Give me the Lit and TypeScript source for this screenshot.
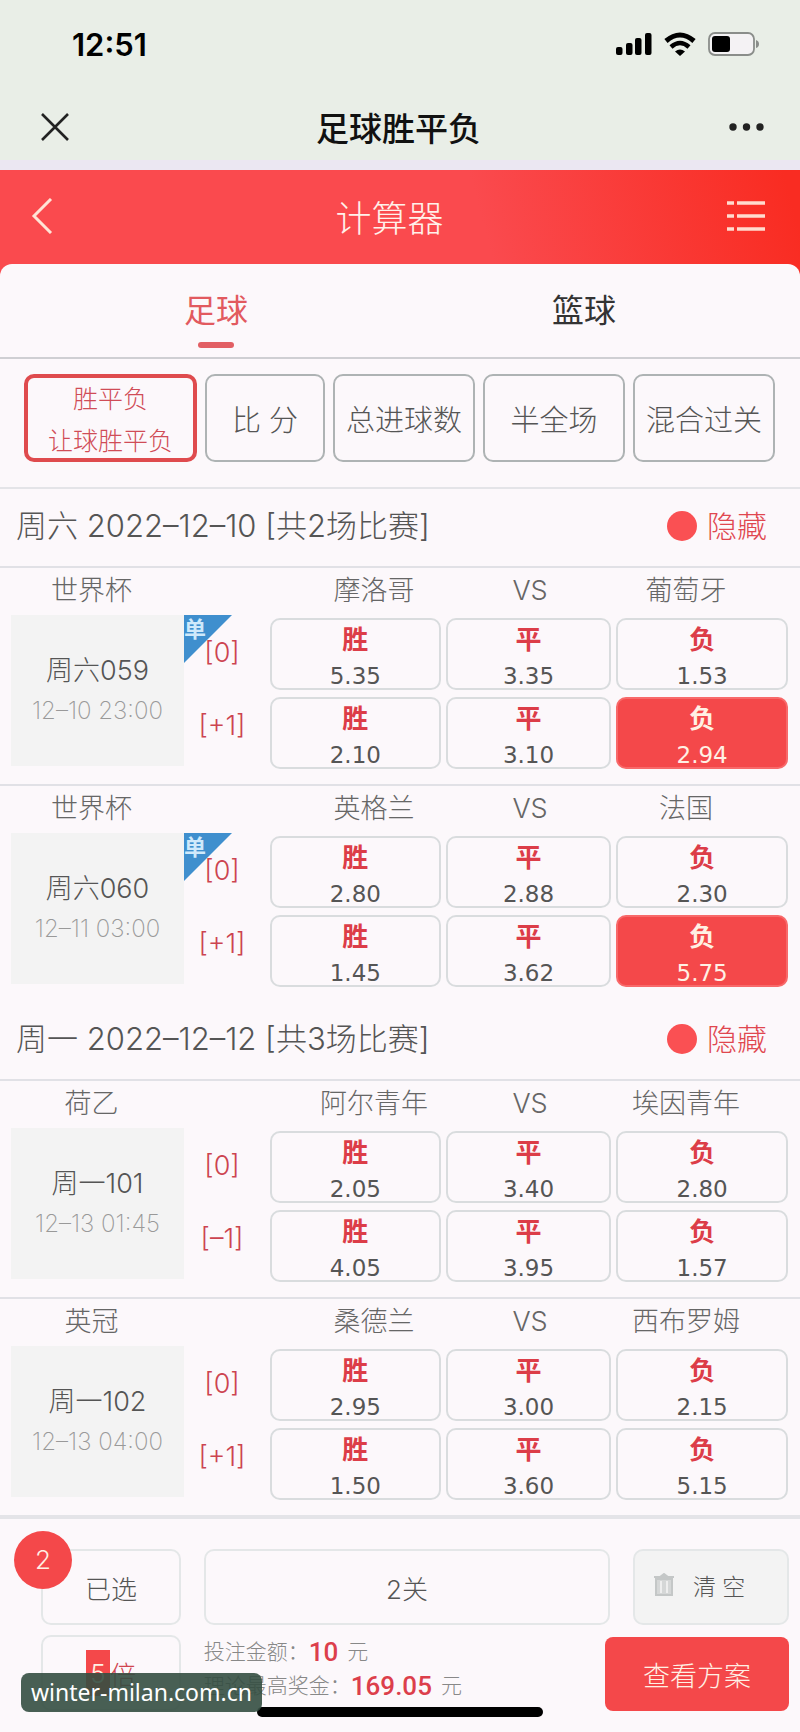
import { LitElement, html, css, svg, nothing } from "lit";
import { customElement, property, state } from "lit/decorators.js";
import { classMap } from "lit/directives/class-map.js";

interface Line {
  handicap: string;
  odds: string[];
}
interface Match {
  league: string;
  no: string;
  time: string;
  home: string;
  away: string;
  single: boolean;
  lines: Line[];
}
interface Day {
  title: string;
  matches: Match[];
}

const DAYS: Day[] = [
  {
    title: "周六 2022–12–10 [共2场比赛]",
    matches: [
      {
        league: "世界杯", no: "周六059", time: "12–10 23:00", home: "摩洛哥", away: "葡萄牙", single: true,
        lines: [
          { handicap: "[0]", odds: ["5.35", "3.35", "1.53"] },
          { handicap: "[+1]", odds: ["2.10", "3.10", "2.94"] },
        ],
      },
      {
        league: "世界杯", no: "周六060", time: "12–11 03:00", home: "英格兰", away: "法国", single: true,
        lines: [
          { handicap: "[0]", odds: ["2.80", "2.88", "2.30"] },
          { handicap: "[+1]", odds: ["1.45", "3.62", "5.75"] },
        ],
      },
    ],
  },
  {
    title: "周一 2022–12–12 [共3场比赛]",
    matches: [
      {
        league: "荷乙", no: "周一101", time: "12–13 01:45", home: "阿尔青年", away: "埃因青年", single: false,
        lines: [
          { handicap: "[0]", odds: ["2.05", "3.40", "2.80"] },
          { handicap: "[–1]", odds: ["4.05", "3.95", "1.57"] },
        ],
      },
      {
        league: "英冠", no: "周一102", time: "12–13 04:00", home: "桑德兰", away: "西布罗姆", single: false,
        lines: [
          { handicap: "[0]", odds: ["2.95", "3.00", "2.15"] },
          { handicap: "[+1]", odds: ["1.50", "3.60", "5.15"] },
        ],
      },
    ],
  },
];

const OUTCOMES = ["胜", "平", "负"];

const reset = css`
  * {
    box-sizing: border-box;
  }
  button,
  input {
    font: inherit;
    color: inherit;
    background: none;
    border: 0;
    margin: 0;
    padding: 0;
  }
  button {
    cursor: pointer;
  }
  svg {
    display: block;
  }
`;

@customElement("match-row")
export class MatchRow extends LitElement {
  @property({ attribute: false }) match!: Match;
  @property({ attribute: false }) picked: Set<string> = new Set();

  static styles = [
    reset,
    css`
      :host {
        display: block;
        border-top: 2px solid #e1e1e6;
      }
      .head {
        display: grid;
        grid-template-columns: 183fr 113fr 156fr 156fr 156fr 36fr;
        line-height: 46px;
        font-size: 27px;
        color: #666;
        text-align: center;
        white-space: nowrap;
      }
      .home {
        grid-column: 3;
      }
      .body {
        display: grid;
        grid-template-columns: 173fr 86fr 518fr;
        align-items: start;
        padding: 1px 12px 15px 11px;
      }
      .info {
        display: flex;
        flex-direction: column;
        align-items: center;
        justify-content: center;
        height: 151px;
        background: #f3f3f3;
        color: #555;
        font-size: 27px;
        line-height: 40px;
      }
      .time {
        font-size: 24px;
        font-weight: 200;
        color: #999;
      }
      .handicaps {
        position: relative;
        display: grid;
        grid-template-rows: 74px 73px;
        align-items: center;
        text-align: center;
        font-size: 27px;
        color: #cc4450;
        padding: 0 10px 0 0;
      }
      .ribbon {
        position: absolute;
        left: 0;
        top: 0;
        width: 48px;
        height: 48px;
        background: #3f8fce;
        clip-path: polygon(0 0, 100% 0, 0 100%);
        color: #cfe9fb;
        font-size: 22px;
        line-height: 28px;
        font-weight: 700;
        text-align: left;
      }
      .handicap {
        position: relative;
      }
      .odds {
        display: grid;
        grid-template-columns: 171fr 166fr 172fr;
        grid-auto-rows: 72px;
        gap: 7px 5px;
        padding-top: 3px;
      }
      .odd {
        display: flex;
        flex-direction: column;
        align-items: center;
        justify-content: flex-start;
        padding-top: 2px;
        border: 2px solid #d9dcde;
        border-radius: 10px;
        line-height: 36px;
      }
      .outcome {
        font-size: 26px;
        font-weight: 700;
        color: #dc3d48;
      }
      .value {
        font-family: "DejaVu Sans", sans-serif;
        font-size: 23px;
        font-weight: 400;
        color: #555;
      }
      .on {
        background: #f4484a;
        border-color: #f8696a;
      }
      .on .outcome,
      .on .value {
        color: #fff0e4;
      }
    `,
  ];

  private toggle(key: string) {
    this.dispatchEvent(new CustomEvent("pick", { detail: key, bubbles: true, composed: true }));
  }

  render() {
    const m = this.match;
    return html`
      <div class="head">
        <span>${m.league}</span>
        <span class="home">${m.home}</span>
        <span>VS</span>
        <span>${m.away}</span>
      </div>
      <div class="body">
        <div class="info"><span>${m.no}</span><span class="time">${m.time}</span></div>
        <div class="handicaps">
          ${m.single ? html`<span class="ribbon">单</span>` : nothing}
          ${m.lines.map((l) => html`<span class="handicap">${l.handicap}</span>`)}
        </div>
        <div class="odds">
          ${m.lines.map((l, row) =>
            l.odds.map((value, i) => {
              const key = `${m.no}-${row}-${i}`;
              const on = this.picked.has(key);
              return html`<button
                class=${classMap({ odd: true, on })}
                aria-pressed=${on ? "true" : "false"}
                @click=${() => this.toggle(key)}
              >
                <span class="outcome">${OUTCOMES[i]}</span><span class="value">${value}</span>
              </button>`;
            })
          )}
        </div>
      </div>
    `;
  }
}

@customElement("app-root")
export class AppRoot extends LitElement {
  @state() private picked = new Set(["周六059-1-2", "周六060-1-2"]);

  static styles = [
    reset,
    css`
      :host {
        display: block;
        position: relative;
        background: #fcf8fb;
        color: #555;
        font-family: Inter, "Noto Sans CJK SC", sans-serif;
        font-weight: 300;
        overflow: hidden;
      }
      .chrome {
        background: linear-gradient(#e9eee7 160px, #ebe7f2 160px);
        color: #111;
      }
      .status {
        display: flex;
        align-items: center;
        justify-content: space-between;
        height: 88px;
        padding: 0 41px 0 72px;
      }
      .clock {
        font-size: 31px;
        font-weight: 600;
        color: #000;
      }
      .signals {
        display: flex;
        align-items: center;
        gap: 12px;
      }
      .nav {
        display: flex;
        align-items: center;
        justify-content: space-between;
        height: 82px;
        padding: 0 36px 4px 41px;
      }
      .title {
        margin: 0;
        font-size: 33px;
        font-weight: 500;
      }
      .banner {
        display: flex;
        align-items: center;
        justify-content: space-between;
        height: 106px;
        padding: 0 34px 14px 31px;
        background: linear-gradient(75deg, #fa4a4e 60%, #f92c22 98%);
        color: #fff1ea;
      }
      .heading {
        margin: 0;
        font-size: 36px;
        font-weight: 300;
      }
      .sheet {
        position: relative;
        margin-top: -12px;
        border-radius: 12px 12px 0 0;
        background: #fcf8fb;
      }
      .tabs {
        display: grid;
        grid-template-columns: 1fr 1fr;
        padding: 0 32px;
        border-bottom: 2px solid #cfcfd3;
      }
      .tab {
        display: flex;
        flex-direction: column;
        align-items: center;
        height: 93px;
        padding-top: 16px;
        font-size: 32px;
        line-height: 62px;
        font-weight: 400;
        color: #333;
      }
      .tab.current {
        color: #e25a5f;
      }
      .tab.current::after {
        content: "";
        width: 36px;
        height: 6px;
        border-radius: 3px;
        background: #e25f64;
      }
      .plays {
        display: grid;
        grid-template-columns: 173fr 120fr 142fr 142fr 142fr;
        gap: 8px;
        padding: 15px 25px 25px 24px;
        border-bottom: 2px solid #e4e4e8;
      }
      .play {
        height: 88px;
        border: 2px solid #aeb3b4;
        border-radius: 10px;
        font-size: 29px;
        white-space: nowrap;
      }
      .play.current {
        border: 4px solid #df4b4e;
        font-size: 25px;
        line-height: 42px;
        color: #d04c57;
      }
      .day {
        display: flex;
        align-items: center;
        justify-content: space-between;
        height: 77px;
        padding: 0 33px 4px 16px;
        line-height: 40px;
      }
      .date {
        margin: 0;
        font-size: 31px;
        font-weight: 300;
      }
      .hide {
        display: flex;
        align-items: center;
        gap: 10px;
        font-size: 30px;
        color: #e0474f;
      }
      .dot {
        width: 30px;
        height: 30px;
        border-radius: 50%;
        background: #fa5053;
      }
      .footer {
        display: grid;
        grid-template-columns: 140fr 407fr 156fr;
        gap: 10px 23px;
        padding: 30px 11px 21px 41px;
        border-top: 4px solid #e4e4e8;
      }
      .cell {
        position: relative;
        display: flex;
        align-items: center;
        justify-content: center;
        height: 76px;
        border: 2px solid #e4e7e8;
        border-radius: 10px;
        font-size: 26px;
      }
      .badge {
        position: absolute;
        left: -29px;
        top: -20px;
        width: 58px;
        height: 58px;
        border-radius: 50%;
        background: #f4484a;
        color: #fff0e4;
        line-height: 58px;
        text-align: center;
      }
      .clear {
        gap: 18px;
        padding: 0 24px 4px 0;
        background: #f3f3f3;
        font-size: 23px;
      }
      .times {
        color: #d0454f;
      }
      .count {
        width: 24px;
        height: 46px;
        background: #f4484a;
        color: #fff0e4;
        text-align: center;
      }
      .summary {
        grid-column: 2 / 4;
        display: flex;
        justify-content: space-between;
        align-items: start;
      }
      .amounts {
        font-size: 21px;
        line-height: 34px;
        color: #888;
        white-space: nowrap;
      }
      .amount {
        display: flex;
        align-items: center;
      }
      .money {
        margin-right: 9px;
        font-family: Roboto, sans-serif;
        font-size: 26px;
        font-weight: 500;
        color: #dc3f4b;
      }
      .submit {
        width: 184px;
        height: 74px;
        margin-top: 2px;
        border-radius: 8px;
        background: #f4484a;
        color: #fff0e4;
        font-size: 27px;
      }
      .site {
        position: absolute;
        left: 21px;
        bottom: 20px;
        padding: 0 10px;
        border-radius: 8px;
        background: rgba(52, 78, 65, 0.9);
        color: #fff;
        font-family: "Noto Sans", sans-serif;
        font-weight: 400;
        font-size: 23px;
        line-height: 39px;
        text-decoration: none;
      }
      .home-bar {
        position: absolute;
        left: 50%;
        bottom: 15px;
        width: 286px;
        height: 10px;
        margin-left: -143px;
        border-radius: 5px;
        background: #000;
      }
    `,
  ];

  private onPick(e: CustomEvent<string>) {
    const next = new Set(this.picked);
    if (!next.delete(e.detail)) next.add(e.detail);
    this.picked = next;
  }

  private signals() {
    return html`<div class="signals">
      <svg width="36" height="24" viewBox="0 0 36 24">
        ${[[0, 15], [10, 11], [19, 6], [29, 1]].map(
          ([x, y]) => svg`<rect x=${x} y=${y} width="6.500" height=${23 - y} rx="2" />`
        )}
      </svg>
      <svg width="32" height="24" viewBox="0 0 32 24" fill="none" stroke="#000" stroke-width="5">
        <path d="M2 9 Q16 -3 30 9" />
        <path d="M7 15 Q16 7 25 15" stroke-width="4.500" />
        <path d="M11 19.500 Q16 15.500 21 19.500 L16 24Z" fill="#000" stroke="none" />
      </svg>
      <svg width="51" height="24" viewBox="0 0 51 24">
        <rect x="1" y="1" width="45" height="22" rx="6" fill="#f4f2f4" stroke="#8a8d8a" stroke-width="1.800" />
        <rect x="4" y="4" width="18" height="16" rx="3" />
        <path d="M48 8 Q51 9 51 12 T48 16Z" fill="#8a8d8a" />
      </svg>
    </div>`;
  }

  render() {
    return html`
      <div class="chrome">
        <div class="status"><span class="clock">12:51</span>${this.signals()}</div>
        <div class="nav">
          <button aria-label="关闭">
            <svg width="28" height="28" viewBox="0 0 28 28" fill="none" stroke="#222" stroke-width="2.600">
              <path d="M1 1 L27 27 M27 1 L1 27" />
            </svg>
          </button>
          <h1 class="title">足球胜平负</h1>
          <button aria-label="更多">
            <svg width="36" height="10" viewBox="0 0 36 10" fill="#222">
              <circle cx="5" cy="5" r="3.700" /><circle cx="18.500" cy="5" r="3.700" /><circle cx="32" cy="5" r="3.700" />
            </svg>
          </button>
        </div>
      </div>
      <header class="banner">
        <button aria-label="返回">
          <svg width="22" height="36" viewBox="0 0 22 36" fill="none" stroke="#ffe4d6" stroke-width="3">
            <path d="M20 1 L3 18 L20 35" />
          </svg>
        </button>
        <h2 class="heading">计算器</h2>
        <button aria-label="菜单">
          <svg width="40" height="32" viewBox="0 0 40 32" fill="none" stroke="#ffdccf" stroke-width="3.600">
            <path d="M1 3 H8 M11 3 H39 M1 16 H8 M11 16 H39 M1 29 H8 M11 29 H39" />
          </svg>
        </button>
      </header>
      <main class="sheet" @pick=${this.onPick}>
        <nav class="tabs">
          <button class="tab current">足球</button>
          <button class="tab">篮球</button>
        </nav>
        <div class="plays">
          <button class="play current">胜平负<br />让球胜平负</button>
          <button class="play">比 分</button>
          <button class="play">总进球数</button>
          <button class="play">半全场</button>
          <button class="play">混合过关</button>
        </div>
        ${DAYS.map(
          (d) => html`
            <section>
              <div class="day">
                <h3 class="date">${d.title}</h3>
                <button class="hide"><span class="dot"></span>隐藏</button>
              </div>
              ${d.matches.map((m) => html`<match-row .match=${m} .picked=${this.picked}></match-row>`)}
            </section>
          `
        )}
      </main>
      <footer class="footer">
        <button class="cell">已选<span class="badge">${this.picked.size}</span></button>
        <button class="cell">2关</button>
        <button class="cell clear">
          <svg width="22" height="24" viewBox="0 0 22 24" fill="none" stroke="#c4c7c7" stroke-width="2">
            <path d="M1 4 H21 M7 4 L11 1 L15 4" />
            <path d="M3 6 V22 H19 V6Z" fill="#d5d7d7" />
            <path d="M8 8 V20 M14 8 V20" stroke="#eee" />
          </svg>
          清 空
        </button>
        <label class="cell times"><input class="count" type="text" value="5" />倍</label>
        <div class="summary">
          <div class="amounts">
            <div class="amount">投注金额： <b class="money">10</b> 元</div>
            <div class="amount">理论最高奖金： <b class="money">169.05</b> 元</div>
          </div>
          <button class="submit">查看方案</button>
        </div>
      </footer>
      <div class="home-bar"></div>
      <a class="site" href="#">winter-milan.com.cn</a>
    `;
  }
}
